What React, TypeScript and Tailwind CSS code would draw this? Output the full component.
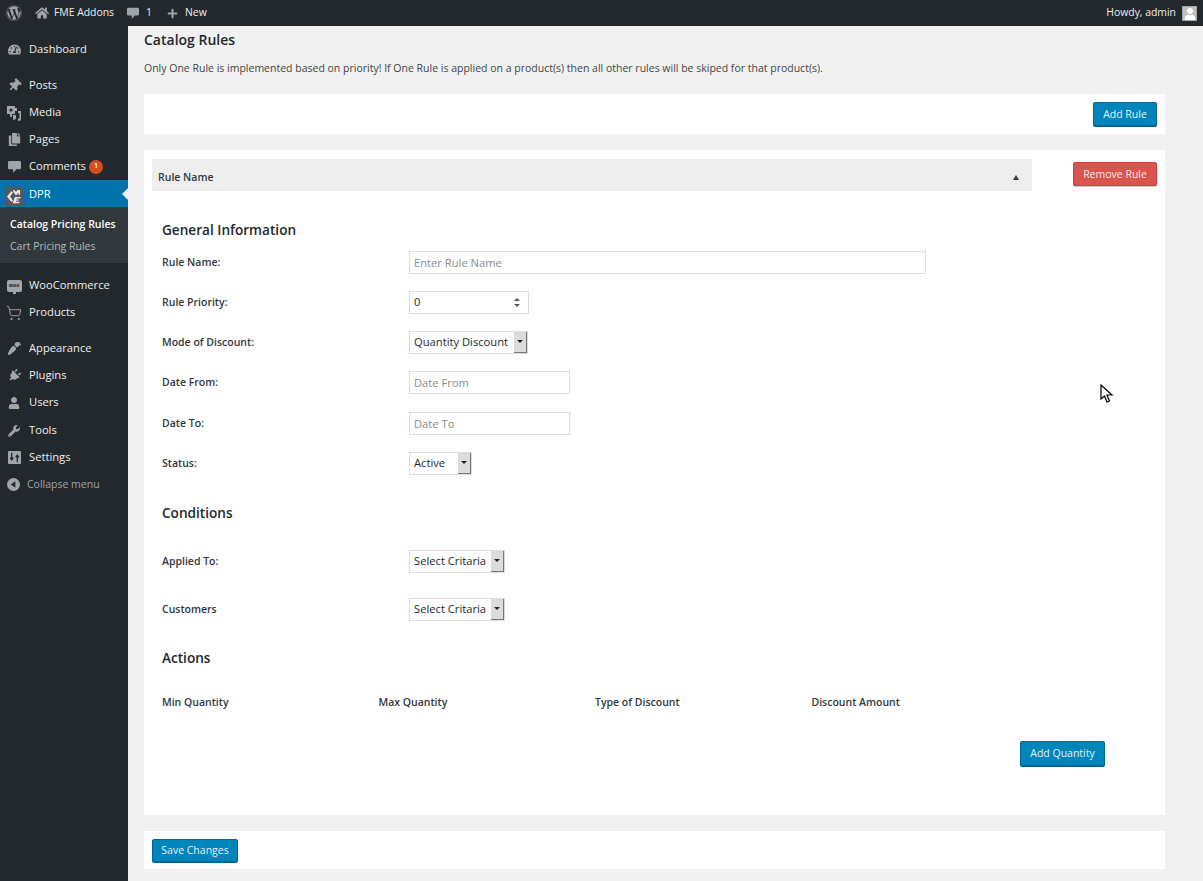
import { ReactNode } from 'react';
import { ShoppingCart } from 'lucide-react';
import {
  FaCopy,
  FaHome,
  FaPaintBrush,
  FaPlug,
  FaPlus,
  FaTachometerAlt,
  FaThumbtack,
  FaUser,
  FaWordpress,
  FaWrench,
} from 'react-icons/fa';

const font = "font-['Open_Sans',sans-serif]";

function BubbleIcon({ size = 13 }: { size?: number }) {
  return (
    <svg viewBox="0 0 14 14" width={size} height={size} fill="currentColor">
      <path d="M1.500 1h11A1.500 1.500 0 0 1 14 2.500v6A1.500 1.500 0 0 1 12.500 10H9l-3.500 4v-4h-4A1.500 1.500 0 0 1 0 8.500v-6A1.500 1.500 0 0 1 1.500 1z" />
    </svg>
  );
}

function MediaIcon() {
  return (
    <svg viewBox="0 0 16 16" className="h-4 w-4" fill="currentColor">
      <path d="M1 1h8v2h2v3h-2v3H6v3H4V9H1z" />
      <circle cx="5" cy="5" r="1.600" fill="#23282d" />
      <path d="M12 6h3v8a2 2 0 0 1-3 1.600 1.600 1.600 0 0 1 1.400-2.400V8H12z" />
      <path d="M7 10h3v3a2 2 0 0 1-3 1.500z" />
    </svg>
  );
}

function SettingsIcon() {
  return (
    <svg viewBox="0 0 14 14" className="h-[13px] w-[13px]">
      <rect width="14" height="14" rx="1" fill="currentColor" />
      <path d="M4 2v7M2.300 7.200 4 9.600l1.700-2.400M10 12V5M8.300 6.800 10 4.400l1.700 2.400" stroke="#23282d" strokeWidth="1.400" fill="none" />
    </svg>
  );
}

function CollapseIcon() {
  return (
    <svg viewBox="0 0 14 14" className="h-[13px] w-[13px]">
      <circle cx="7" cy="7" r="7" fill="currentColor" />
      <path d="M9 3.500v7L4 7z" fill="#23282d" />
    </svg>
  );
}

function WooIcon() {
  return (
    <div className="relative flex h-[12px] w-[15px] items-center justify-center rounded-[2px] bg-[#a0a5aa]">
      <span className="text-[5px] font-bold leading-none text-[#23282d]">woo</span>
      <span className="absolute -bottom-[2px] left-[6px] h-[2px] w-[3px] bg-[#a0a5aa]" />
    </div>
  );
}

function DprIcon() {
  return (
    <svg viewBox="0 0 19 19" className="h-[19px] w-[19px]">
      <rect width="19" height="19" fill="#55595d" />
      <path d="M2 9.500 6.500 4 8 5.500 5 9.500l3 4-1.500 1.500z" fill="#e8e8e8" />
      <path d="M8 3h1.500L11 5l1.500-2H15v5h-1.500V5.500L11 8.500 8.500 5z" fill="#e8e8e8" />
      <path d="M10 10h6l-1 1.500h-3.500v1H14l-.8 1.200h-2.200v1H15l-1 1.500H7.500z" fill="#e8e8e8" />
    </svg>
  );
}

function MenuItem({ icon, label, badge, className = '' }: { icon: ReactNode; label: string; badge?: boolean; className?: string }) {
  return (
    <div className={`flex h-[27px] items-center text-[#eeeeee] ${className}`}>
      <span className="flex w-[29px] shrink-0 justify-center pr-[1px] text-[#a0a5aa]">{icon}</span>
      <span className="text-[11.2px]">{label}</span>
      {badge && (
        <span className="ml-[3px] flex h-[14px] w-[14px] items-center justify-center rounded-full bg-[#d54e21] text-[7px] font-semibold text-white">
          1
        </span>
      )}
    </div>
  );
}

function Sidebar() {
  return (
    <aside className="flex w-[128px] shrink-0 flex-col bg-[#23282d] pt-[10px]">
      <MenuItem icon={<FaTachometerAlt size={13} />} label="Dashboard" />
      <MenuItem icon={<FaThumbtack size={13} className="rotate-45" />} label="Posts" className="mt-[9px]" />
      <MenuItem icon={<MediaIcon />} label="Media" />
      <MenuItem icon={<FaCopy size={13} />} label="Pages" />
      <MenuItem icon={<BubbleIcon />} label="Comments" badge />
      <div className="relative flex h-[27px] items-center bg-[#0073aa] text-white">
        <span className="flex w-[29px] justify-center pt-[6px]">
          <DprIcon />
        </span>
        <span className="pt-[1px] text-[11.2px]">DPR</span>
        <span className="absolute right-0 top-[8px] h-0 w-0 border-y-[6px] border-r-[6px] border-y-transparent border-r-[#f1f1f1]" />
      </div>
      <div className="flex h-[56px] flex-col justify-center gap-[5px] bg-[#32373c] pl-[10px] text-[10.5px] leading-[17px]">
        <span className="font-semibold text-white">Catalog Pricing Rules</span>
        <span className="text-[#b4b9be]">Cart Pricing Rules</span>
      </div>
      <MenuItem icon={<WooIcon />} label="WooCommerce" className="mt-[9px]" />
      <MenuItem icon={<ShoppingCart size={16} strokeWidth={1.4} />} label="Products" />
      <MenuItem icon={<FaPaintBrush size={13} className="rotate-180" />} label="Appearance" className="mt-[9px]" />
      <MenuItem icon={<FaPlug size={13} className="rotate-45" />} label="Plugins" />
      <MenuItem icon={<FaUser size={12} />} label="Users" />
      <MenuItem icon={<FaWrench size={12} />} label="Tools" className="mt-[1px]" />
      <MenuItem icon={<SettingsIcon />} label="Settings" />
      <div className="flex h-[27px] items-center text-[10.5px] text-[#a0a5aa]">
        <span className="flex w-[27px] justify-center pr-[1px]">
          <CollapseIcon />
        </span>
        Collapse menu
      </div>
    </aside>
  );
}

function TopBar() {
  return (
    <header className="flex h-[26px] items-center bg-[#23282d] text-[10.4px] text-[#eeeeee]">
      <FaWordpress size={16} className="ml-[6px] text-[#a0a5aa]" />
      <FaHome size={14} className="ml-[13px] text-[#a0a5aa]" />
      <span className="ml-[5px]">FME Addons</span>
      <span className="ml-[13px] text-[#a0a5aa]">
        <BubbleIcon size={12} />
      </span>
      <span className="ml-[7px]">1</span>
      <FaPlus size={11} className="ml-[15px] text-[#a0a5aa]" />
      <span className="ml-[7px]">New</span>
      <span className="ml-auto">Howdy, admin</span>
      <div className="mx-[6px] flex h-[15px] w-[15px] items-end justify-center overflow-hidden border border-[#a0a5aa] bg-[#c0c0c0]">
        <FaUser size={12} className="text-white" />
      </div>
    </header>
  );
}

function Button({ label, red, className = '' }: { label: string; red?: boolean; className?: string }) {
  const color = red
    ? 'border-[#d43f3a] bg-[#d9534f] text-[#fbe9e9] shadow-[0_1px_0_#ccc]'
    : 'border-[#006799] bg-[#0085ba] text-[#e5f3f9] shadow-[0_1px_0_#006799]';
  return (
    <div className={`flex items-center justify-center rounded-[2px] border pt-[1px] text-[10.5px] ${color} ${className}`}>
      {label}
    </div>
  );
}

function Field({ placeholder, className }: { placeholder: string; className: string }) {
  return (
    <input
      readOnly
      placeholder={placeholder}
      className={`h-[23px] border border-[#dddddd] bg-white px-[4px] text-[11.2px] outline-none placeholder:text-[#8a8a8a] ${className}`}
    />
  );
}

function SelectBox({ value, className }: { value: string; className: string }) {
  return (
    <div className={`flex h-[23px] items-center justify-between border border-[#dddddd] bg-white pl-[4px] text-[11.2px] text-[#23282d] ${className}`}>
      <span>{value}</span>
      <span className="flex h-[21px] w-[13px] items-center justify-center border-r border-b border-r-[#777] border-b-[#777] bg-[#dcdcdc]">
        <span className="h-0 w-0 border-x-[3px] border-t-[3px] border-x-transparent border-t-[#222]" />
      </span>
    </div>
  );
}

function Row({ label, children, className = 'h-10' }: { label: string; children: ReactNode; className?: string }) {
  return (
    <div className={`flex items-center ${className}`}>
      <span className="w-[247px] pt-[2px] text-[10.5px] font-semibold text-[#32373c]">{label}</span>
      {children}
    </div>
  );
}

function Heading({ children, className = '' }: { children: ReactNode; className?: string }) {
  return <h3 className={`text-[13.6px] font-semibold leading-[20px] text-[#23282d] ${className}`}>{children}</h3>;
}

export default function App() {
  return (
    <div className={`flex h-[881px] w-[1203px] flex-col overflow-hidden bg-[#f1f1f1] ${font}`}>
      <TopBar />
      <div className="flex min-h-0 flex-1">
        <Sidebar />
        <main className="flex w-[1037px] flex-col pl-[16px]">
          <h1 className="mt-[4px] text-[14px] font-semibold leading-[20px] text-[#23282d]">Catalog Rules</h1>
          <p className="mt-[11px] text-[10.5px] leading-[14px] text-[#444444]">
            Only One Rule is implemented based on priority! If One Rule is applied on a product(s) then all other rules will be skiped for that product(s).
          </p>

          <section className="mt-[19px] flex h-[40px] w-[1021px] items-center justify-end bg-white pr-[8px]">
            <Button label="Add Rule" className="h-[24px] w-[64px]" />
          </section>

          <section className="mt-[16px] h-[665px] w-[1021px] bg-white pt-[9px]">
            <div className="flex items-start px-[8px]">
              <div className="flex h-[32px] w-[880px] items-center justify-between bg-[#eeeeee] pl-[6px] pr-[13px] pt-[5px] text-[10.5px] font-semibold text-[#32373c]">
                Rule Name
                <span className="h-0 w-0 border-x-[3px] border-b-[5px] border-x-transparent border-b-[#32373c]" />
              </div>
              <Button label="Remove Rule" red className="ml-auto mt-[3px] h-[24px] w-[84px]" />
            </div>

            <div className="pl-[18px] pt-[29px]">
              <Heading>General Information</Heading>
              <div className="mt-[2px]">
                <Row label="Rule Name:">
                  <Field placeholder="Enter Rule Name" className="w-[517px]" />
                </Row>
                <Row label="Rule Priority:">
                  <div className="flex h-[23px] w-[120px] items-center justify-between border border-[#dddddd] pl-[4px] pr-[8px] text-[11.2px] text-[#23282d]">
                    0
                    <span className="flex flex-col gap-[3px]">
                      <span className="h-0 w-0 border-x-[3px] border-b-[3px] border-x-transparent border-b-[#555]" />
                      <span className="h-0 w-0 border-x-[3px] border-t-[3px] border-x-transparent border-t-[#555]" />
                    </span>
                  </div>
                </Row>
                <Row label="Mode of Discount:">
                  <SelectBox value="Quantity Discount" className="w-[119px]" />
                </Row>
                <Row label="Date From:">
                  <Field placeholder="Date From" className="w-[161px]" />
                </Row>
                <Row label="Date To:" className="mt-[1px] h-10">
                  <Field placeholder="Date To" className="w-[161px]" />
                </Row>
                <Row label="Status:">
                  <SelectBox value="Active" className="w-[63px]" />
                </Row>
              </div>

              <Heading className="mt-[20px]">Conditions</Heading>
              <div className="mt-[14px]">
                <Row label="Applied To:" className="h-12">
                  <SelectBox value="Select Critaria" className="w-[96px]" />
                </Row>
                <Row label="Customers" className="h-12">
                  <SelectBox value="Select Critaria" className="w-[96px]" />
                </Row>
              </div>

              <Heading className="mt-[15px]">Actions</Heading>
              <div className="mt-[27px] grid w-[866px] grid-cols-4 text-[10.5px] font-semibold leading-[14px] text-[#32373c]">
                <span>Min Quantity</span>
                <span>Max Quantity</span>
                <span>Type of Discount</span>
                <span>Discount Amount</span>
              </div>
              <div className="mt-[32px] flex justify-end pr-[60px]">
                <Button label="Add Quantity" className="h-[25px] w-[85px]" />
              </div>
            </div>
          </section>

          <section className="mt-[16px] flex h-[38px] w-[1021px] items-center bg-white pl-[8px]">
            <Button label="Save Changes" className="h-[23px] w-[86px]" />
          </section>
        </main>
      </div>
      <svg viewBox="0 0 14 20" className="absolute left-[1100px] top-[384px] h-[20px] w-[14px]">
        <path d="M1 1v14l3.500-3 2.500 6 2.500-1-2.500-6h5z" fill="#fff" stroke="#000" strokeWidth="1.200" />
      </svg>
    </div>
  );
}
